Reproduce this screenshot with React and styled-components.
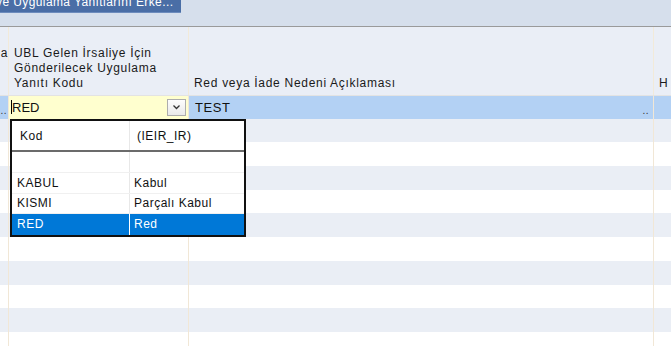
import React from 'react';
import styled, { createGlobalStyle } from 'styled-components';

const GlobalStyle = createGlobalStyle`
  html, body {
    margin: 0;
    padding: 0;
    background: #ffffff;
    overflow: hidden;
  }
  body {
    font-family: "Liberation Sans", Arial, sans-serif;
  }
`;

const ROW_H = 23.7;

const Screen = styled.div`
  width: 671px;
  height: 346px;
  overflow: hidden;
  position: relative;
  display: flex;
  flex-direction: column;
`;

const Toolbar = styled.div`
  flex-shrink: 0;
  height: 26px;
  background: #d6dfec;
  border-bottom: 1px solid #9a9a9a;
  overflow: hidden;
  display: flex;
  align-items: flex-start;
`;

const ToolButton = styled.div`
  margin-top: -8px;
  height: 21px;
  width: 181px;
  background: #4a6ea6;
  border-bottom: 1px solid #6d8cbd;
  color: #ffffff;
  font-size: 12px;
  line-height: 21px;
  letter-spacing: 0.4px;
  white-space: nowrap;
  overflow: hidden;
  box-sizing: border-box;
  text-indent: -4px;
`;

const Grid = styled.div`
  flex: 1;
  display: flex;
  flex-direction: column;
`;

const HeaderRow = styled.div`
  flex-shrink: 0;
  display: grid;
  grid-template-columns: 9px 180px 465px 1fr;
  height: 68px;
  background: #eaeef6;
`;

const HeaderCell = styled.div`
  border-right: ${p => (p.$last ? 'none' : '1px solid #f2ead9')};
  display: flex;
  align-items: flex-end;
  padding: 0 0 ${p => p.$bottom || 4}px ${p => p.$pad ?? 5}px;
  font-size: 12px;
  line-height: 15px;
  letter-spacing: 0.7px;
  color: #1a1a1a;
  overflow: hidden;
  white-space: pre-line;
  box-sizing: border-box;
  justify-content: ${p => (p.$right ? 'flex-end' : 'flex-start')};
`;

const Row = styled.div`
  flex-shrink: 0;
  display: grid;
  grid-template-columns: 9px 180px 465px 1fr;
  height: ${ROW_H}px;
  background: ${p => (p.$selected ? '#b3d1f4' : p.$alt ? '#eaeef5' : '#ffffff')};
  border-top: ${p => (p.$selected ? '1px solid #e3e3e3' : 'none')};
  box-sizing: border-box;
`;

const Cell = styled.div`
  border-right: ${p => (p.$last ? 'none' : '1px solid #f1e7d6')};
  font-size: 13px;
  color: #111;
  display: flex;
  align-items: center;
  padding-left: ${p => p.$pad || 0}px;
  overflow: hidden;
  position: relative;
  letter-spacing: ${p => (p.$wide ? '0.6px' : '0')};
`;

const Dots = styled.span`
  position: absolute;
  right: ${p => p.$right || 1}px;
  bottom: 5px;
  font-size: 10px;
  line-height: 6px;
  color: #333;
  letter-spacing: 0.5px;
`;

const Combo = styled.div`
  background: #ffffcf;
  display: flex;
  align-items: center;
  justify-content: space-between;
  border-right: 1px solid #f1e7d6;
  padding-left: 2px;
  font-size: 13px;
  color: #111;
`;

const Caret = styled.span`
  display: inline-block;
  width: 1px;
  height: 14px;
  background: #000;
`;

const DropButton = styled.div`
  width: 19px;
  height: 17px;
  margin-right: 2px;
  background: linear-gradient(#fdfdfd, #e9e9e9);
  border: 1px solid #adadad;
  box-sizing: border-box;
  display: flex;
  align-items: center;
  justify-content: center;
`;

const Popup = styled.div`
  position: absolute;
  left: 10px;
  top: 119px;
  width: 236px;
  border: 2px solid #111;
  background: #ffffff;
  box-sizing: border-box;
  font-size: 12px;
  letter-spacing: 0.5px;
  color: #111;
`;

const PopRow = styled.div`
  display: grid;
  grid-template-columns: 118px 1fr;
  height: ${p => p.$h || 20.5}px;
  background: ${p => (p.$selected ? '#0078d7' : '#ffffff')};
  color: ${p => (p.$selected ? '#ffffff' : '#111')};
  border-bottom: ${p => (p.$head ? '2px solid #6b6b6b' : p.$selected ? 'none' : '1px solid #f0f0f0')};
  box-sizing: border-box;
`;

const PopCell = styled.div`
  display: flex;
  align-items: center;
  padding-left: ${p => p.$pad || 5}px;
  border-right: ${p => (p.$first ? `1px solid ${p.$selected ? '#ffffff' : '#e8e8e8'}` : 'none')};
`;

const rows = Array.from({ length: 10 }, (_, i) => i);

export default function App() {
  return (
    <>
      <GlobalStyle />
      <Screen>
        <Toolbar>
          <ToolButton>ve Uygulama Yanıtlarını Erke...</ToolButton>
        </Toolbar>
        <Grid>
          <HeaderRow>
            <HeaderCell $pad={0} $bottom={34} $right>a</HeaderCell>
            <HeaderCell>{'UBL Gelen İrsaliye İçin\nGönderilecek Uygulama\nYanıtı Kodu'}</HeaderCell>
            <HeaderCell>Red veya İade Nedeni Açıklaması</HeaderCell>
            <HeaderCell $last>H</HeaderCell>
          </HeaderRow>
          <Row $selected>
            <Cell>
              <Dots $right={0}>..</Dots>
            </Cell>
            <Combo>
              <span style={{ display: 'flex', alignItems: 'center' }}>
                <Caret />
                RED
              </span>
              <DropButton>
                <svg width="9" height="6" viewBox="0 0 9 6">
                  <path d="M1.5 1.5 L4.5 4.5 L7.5 1.5" fill="none" stroke="#333" strokeWidth="1.3" />
                </svg>
              </DropButton>
            </Combo>
            <Cell $pad={6} $wide>
              TEST
              <Dots $right={4}>..</Dots>
            </Cell>
            <Cell $last />
          </Row>
          {rows.map(i => (
            <Row key={i} $alt={i % 2 === 0}>
              <Cell />
              <Cell />
              <Cell />
              <Cell $last />
            </Row>
          ))}
        </Grid>
        <Popup>
          <PopRow $head $h={31}>
            <PopCell $first $pad={8}>Kod</PopCell>
            <PopCell $pad={7}>(IEIR_IR)</PopCell>
          </PopRow>
          <PopRow $h={21}>
            <PopCell $first />
            <PopCell />
          </PopRow>
          <PopRow>
            <PopCell $first>KABUL</PopCell>
            <PopCell $pad={4}>Kabul</PopCell>
          </PopRow>
          <PopRow>
            <PopCell $first>KISMI</PopCell>
            <PopCell $pad={4}>Parçalı Kabul</PopCell>
          </PopRow>
          <PopRow $selected>
            <PopCell $first $selected>RED</PopCell>
            <PopCell $pad={4}>Red</PopCell>
          </PopRow>
        </Popup>
      </Screen>
    </>
  );
}
